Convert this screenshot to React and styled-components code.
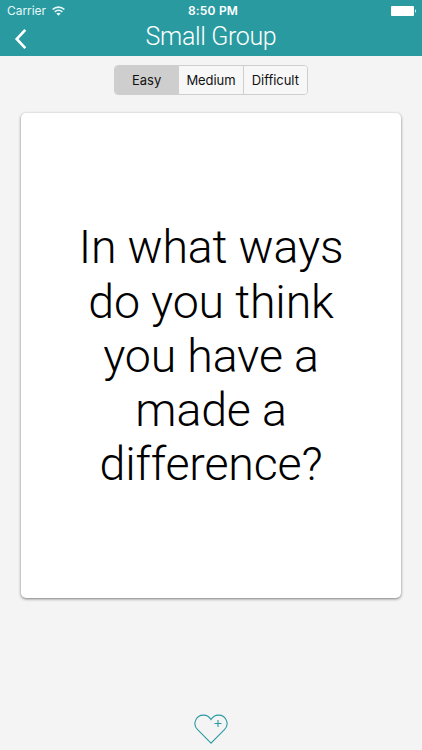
import React from 'react';
import styled, { createGlobalStyle } from 'styled-components';

const GlobalStyle = createGlobalStyle`
  body {
    margin: 0;
    background: #f4f4f4;
  }
  * {
    box-sizing: border-box;
  }
`
const ScreenStyled = styled.div`
  display: flex;
  flex-direction: column;
  align-items: center;
  width: 422px;
  height: 750px;
  overflow: hidden;
  background: #f4f4f4;
  font-family: Roboto, sans-serif;
`
const HeaderStyled = styled.header`
  width: 100%;
  height: 56px;
  color: white;
  background: #2a9aa1;
`
const StatusBarStyled = styled.div`
  display: grid;
  grid-template-columns: 1fr auto 1fr;
  align-items: center;
  height: 22px;
  padding: 0 5px 0 7px;
  font-family: Inter, sans-serif;
  font-size: 12px;
  line-height: 22px;
`
const CarrierStyled = styled.div`
  display: flex;
  align-items: center;
  gap: 6px;
  color: #e6f8f8;
  letter-spacing: -0.05px;
`
const ClockStyled = styled.div`
  padding-left: 2px;
  font-weight: 600;
  letter-spacing: 0.2px;
`
const BatteryStyled = styled.svg`
  justify-self: end;
`
const NavBarStyled = styled.div`
  display: grid;
  grid-template-columns: 42px 1fr 42px;
  height: 34px;
`
const BackButtonStyled = styled.button`
  display: flex;
  height: 34px;
  padding: 6px 0 0 14px;
  border: none;
  background: none;
  color: inherit;
`
const TitleStyled = styled.h1`
  margin: 0;
  font-size: 25px;
  font-weight: 300;
  letter-spacing: -0.35px;
  line-height: 30px;
  text-align: center;
`
const LevelsStyled = styled.div`
  display: flex;
  flex: none;
  width: 194px;
  height: 30px;
  margin-top: 9px;
  border: 1px solid #cecece;
  border-radius: 4px;
  overflow: hidden;
`
const LevelStyled = styled.button`
  flex: 1;
  padding: 0;
  border: none;
  border-left: ${props => props.$first ? 'none' : '1px solid #cecece'};
  background: ${props => props.$active ? '#cecece' : '#f7f7f7'};
  color: #111;
  font-family: Inter, sans-serif;
  font-size: 13px;
  letter-spacing: -0.05px;
  line-height: 28px;
`
const CardStyled = styled.main`
  display: flex;
  flex: none;
  align-items: center;
  justify-content: center;
  width: 380px;
  height: 485px;
  margin-top: 18px;
  border-radius: 5px;
  background: white;
  box-shadow: 0 1px 3px rgba(0, 0, 0, 0.5);
`
const QuestionStyled = styled.p`
  width: 290px;
  margin: 1px 0 0;
  color: black;
  font-size: 46.5px;
  font-weight: 300;
  letter-spacing: -0.15px;
  line-height: 54.3px;
  text-align: center;
`
const FavoriteButtonStyled = styled.button`
  display: flex;
  margin-top: 115px;
  padding: 0;
  border: none;
  background: none;
  color: #2a9aa1;
`

const levels = ['Easy', 'Medium', 'Difficult'];

const WifiIcon = () => (
  <svg width="13" height="10" viewBox="0 0 13 10" fill="none" stroke="currentColor" strokeWidth="1.7">
    <path d="M0.6 3.5C4 0.3 9 0.3 12.4 3.5" />
    <path d="M2.7 5.9C4.9 3.9 8.1 3.9 10.3 5.9" />
    <path d="M4.3 7.6C5.6 6.3 7.4 6.3 8.7 7.6L6.5 9.8Z" fill="currentColor" stroke="none" />
  </svg>
);

const BatteryIcon = () => (
  <BatteryStyled width="26" height="10" viewBox="0 0 26 10" fill="currentColor">
    <rect x="0" y="0" width="23" height="10" rx="1" />
    <path d="M24 3.2C25.6 3.8 25.6 6.2 24 6.8Z" opacity="0.8" />
  </BatteryStyled>
);

const HeartPlusIcon = () => (
  <svg width="34" height="32" viewBox="0 0 34 32" fill="none" stroke="currentColor" strokeWidth="1.1">
    <path d="M17 30.2L3.6 16.6A8.4 8.4 0 0 1 9.5 2.1C12.7 2.1 15.3 3.6 17 6.6C18.7 3.6 21.3 2.1 24.5 2.1A8.4 8.4 0 0 1 30.4 16.6Z" />
    <path d="M24 7V14M20.5 10.5H27.5" />
  </svg>
);

class App extends React.Component {
  constructor(props){
    super(props);
    this.state = {
      level: 'Easy'
    };
  }

  handleLevel = (level) => {
    this.setState({ level });
  }

  render() {
    return (
      <ScreenStyled>
        <GlobalStyle />
        <HeaderStyled>
          <StatusBarStyled>
            <CarrierStyled>Carrier <WifiIcon /></CarrierStyled>
            <ClockStyled>8:50 PM</ClockStyled>
            <BatteryIcon />
          </StatusBarStyled>
          <NavBarStyled>
            <BackButtonStyled aria-label="Back">
              <svg width="14" height="22" viewBox="0 0 14 22" fill="none" stroke="currentColor" strokeWidth="2.6">
                <path d="M11.3 1.8L2.7 11L11.3 20.2" />
              </svg>
            </BackButtonStyled>
            <TitleStyled>Small Group</TitleStyled>
          </NavBarStyled>
        </HeaderStyled>
        <LevelsStyled>
          {levels.map((level, i) => (
            <LevelStyled
              key={level}
              $first={i === 0}
              $active={level === this.state.level}
              onClick={() => this.handleLevel(level)}
            >
              {level}
            </LevelStyled>
          ))}
        </LevelsStyled>
        <CardStyled>
          <QuestionStyled>In what ways do you think you have a made a difference?</QuestionStyled>
        </CardStyled>
        <FavoriteButtonStyled aria-label="Add to favorites">
          <HeartPlusIcon />
        </FavoriteButtonStyled>
      </ScreenStyled>
    );
  }
}

export default App;
